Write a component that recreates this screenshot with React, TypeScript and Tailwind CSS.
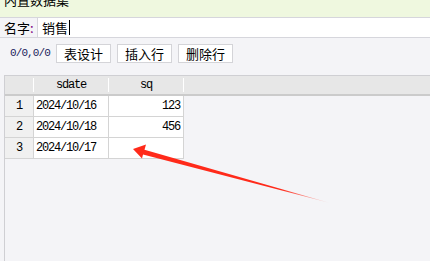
const cjk = "font-['Noto_Sans_CJK_SC','Noto_Sans',sans-serif]";
const mono = "font-['Liberation_Mono','Noto_Sans_CJK_SC',monospace]";

const rows = [
  { n: 1, sdate: "2024/10/16", sq: "123" },
  { n: 2, sdate: "2024/10/18", sq: "456" },
  { n: 3, sdate: "2024/10/17", sq: "" },
];

function Arrow() {
  return (
    <svg className="absolute left-0 top-0 pointer-events-none" width="430" height="261">
      <defs>
        <linearGradient id="fade" x1="133" y1="150" x2="330" y2="203" gradientUnits="userSpaceOnUse">
          <stop offset="0" stopColor="#ff2a1a" />
          <stop offset="0.75" stopColor="#ff2a1a" />
          <stop offset="1" stopColor="#ff2a1a" stopOpacity="0.1" />
        </linearGradient>
      </defs>
      <polygon
        points="133,149 146,144.5 144.5,149.8 330,203 143,154.6 142,158.5"
        fill="url(#fade)"
      />
    </svg>
  );
}

export default function App() {
  return (
    <div className={`relative w-[430px] h-[261px] overflow-hidden bg-[#f4f4f7] text-black ${cjk}`}>
      <div className="h-[18px] overflow-hidden bg-[#eff8df] border-b border-[#d6d6dc] px-[4px]">
        <div className="text-[13px] leading-[13px] mt-[-7px]">内置数据集</div>
      </div>

      <div className="flex items-center h-[20px] bg-[#f4f4f7] border-b border-[#d6d6dc]">
        <span className="pl-[4px] w-[37px] text-[13px] leading-none">
          名字<span className="text-[#800080]">:</span>
        </span>
        <div className="flex-1 h-full bg-white border-l border-[#d6d6dc] flex items-center pl-[4px]">
          <span className="text-[13px] leading-none">销售</span>
          <span className="w-px h-[15px] bg-black ml-[1px]" />
        </div>
      </div>

      <div className="flex items-center h-[29px] pt-[1px] pl-[10px]">
        <span className={`${mono} text-[11px] tracking-[-0.9px] text-[#1c1c5c] w-[46px]`}>0/0,0/0</span>
        <div className="flex gap-[6px]">
          {["表设计", "插入行", "删除行"].map((t) => (
            <button
              key={t}
              className="w-[55px] h-[19px] bg-white border border-[#d4d4d8] text-[13px] leading-none flex items-center justify-center"
            >
              {t}
            </button>
          ))}
        </div>
      </div>

      <div className="ml-[4px] mt-[8px] h-[200px] border-l border-t border-[#cfcfd3]">
        <div className="flex h-[20px] bg-[#e7e7e7] border-b-2 border-[#cbcbcb] text-[12px]">
          <div className="w-[29px] flex items-center justify-end">
            <span className="w-px h-[14px] bg-white" />
          </div>
          <div className={`${mono} w-[75px] flex items-center`}>
            <span className="flex-1 text-center tracking-[-1.2px]">sdate</span>
            <span className="w-px h-[14px] bg-white" />
          </div>
          <div className={`${mono} w-[75px] flex items-center`}>
            <span className="flex-1 text-center tracking-[-1.2px]">sq</span>
            <span className="w-px h-[14px] bg-white" />
          </div>
        </div>
        {rows.map((r) => (
          <div key={r.n} className={`${mono} flex h-[21px] text-[12px] tracking-[-1.2px]`}>
            <div className="w-[29px] bg-[#f0f0f0] border-b border-r border-[#d4d4d4] flex items-center justify-center">
              {r.n}
            </div>
            <div className="w-[75px] bg-white border-b border-r border-[#d4d4d4] flex items-center pl-[2px]">
              {r.sdate}
            </div>
            <div className="w-[75px] bg-white border-b border-r border-[#d4d4d4] flex items-center justify-end pr-[3px]">
              {r.sq}
            </div>
          </div>
        ))}
      </div>

      <Arrow />
    </div>
  );
}
